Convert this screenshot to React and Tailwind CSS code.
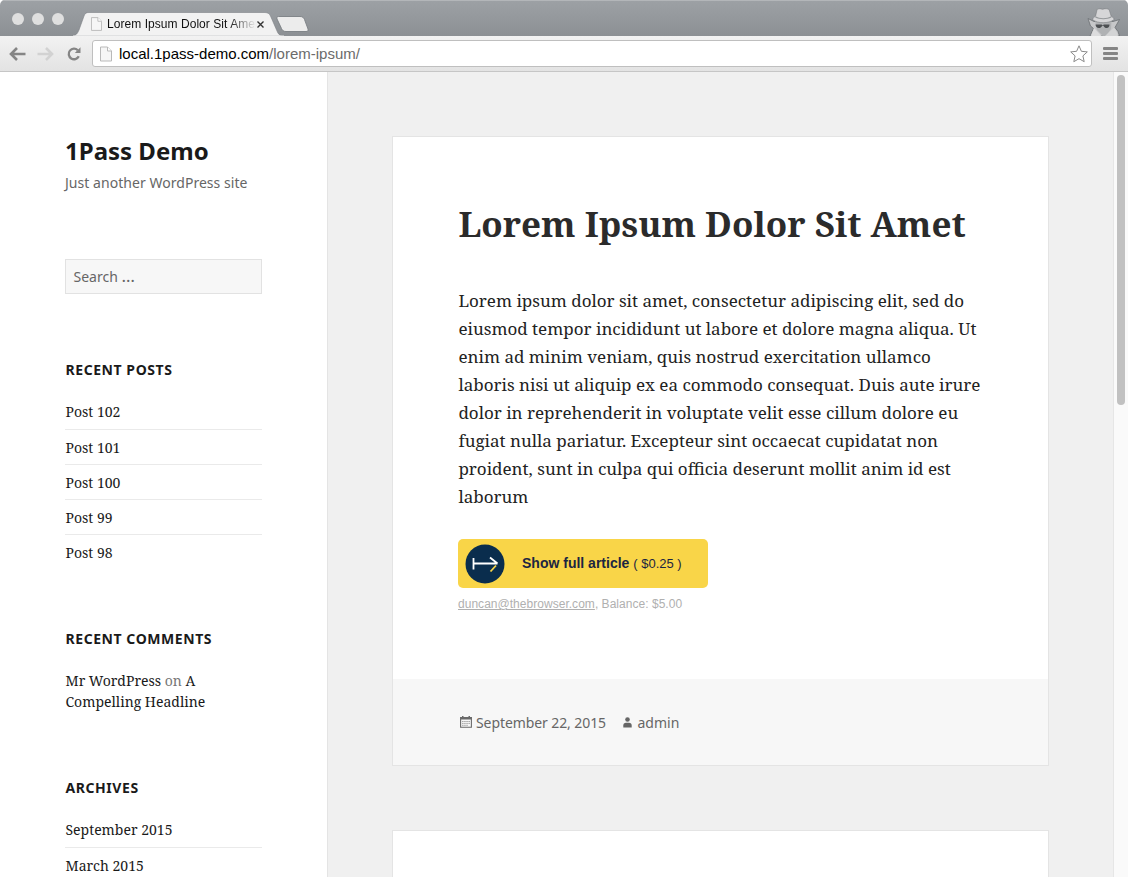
const posts = ['Post 102', 'Post 101', 'Post 100', 'Post 99', 'Post 98'];
const archives = ['September 2015', 'March 2015'];

function PageIcon({ className }) {
  return (
    <svg className={className} viewBox="0 0 12 15" fill="none">
      <path d="M.5.5h7l4 4v10H.5z" fill="#f6f6f6" stroke="#b9b9b9" />
      <path d="M7.5.5v4h4" fill="#fff" stroke="#b9b9b9" />
    </svg>
  );
}

function Incognito() {
  return (
    <svg className="h-[28px] w-[34px] shrink-0" viewBox="0 0 34 28">
      <path d="M1 10.500 7 13.500 26 13.500 32.500 11.500 28 19.500 31 23.500 32.500 28H3L5 23.500 6.500 20.500 3.500 18Z" fill="#c6c7c9" stroke="#6b6e72" strokeWidth=".8" />
      <path d="M8 13h16.500l-.5 8-5 7h-3l-6-6z" fill="#b0b2b4" />
      <path d="M7 20l7.500 8H4z" fill="#dcdcdd" />
      <path d="M27 19.500 18 28h13l-1-3.500z" fill="#d3d4d5" />
      <path d="M8.500 16.500h6l1.200.7 1.200-.7H22.500c0 2.300-1 3.500-2.700 3.500-1.500 0-2.700-.8-3.300-2.300h-1.300C14.500 19.200 13.300 20 11.800 20c-1.900 0-3.100-1.200-3.300-3.500z" fill="#4c4f52" />
      <path d="M5.500 11.500c.5-1.500 1.500-2.500 3-3.200L10 1.800C10.500.6 13 .3 15.500 1.300 18 .3 21.500.6 22.200 1.800l2 6.500c1.500.7 2.500 1.700 3 3.200-3 2.300-7 3.200-11 3.200s-8-.9-10.700-3.200z" fill="#d6d6d8" stroke="#7b7e82" strokeWidth=".6" />
      <path d="M8.500 8.300c4 2.500 11.500 2.500 15.700 0l.3 1.200c-4.500 2.300-12 2.300-16.300 0z" fill="#96999c" />
    </svg>
  );
}

function TabStrip() {
  return (
    <div className="flex h-[36px] items-end bg-linear-to-b from-[#9da1a5] to-[#8c9094] shadow-[inset_0_1px_0_#b3b6b9]">
      <div className="flex h-[36px] items-center gap-[8px] pt-[2px] pl-[12px]">
        <span className="size-[12px] rounded-full bg-[#dfdfdf]" />
        <span className="size-[12px] rounded-full bg-[#dfdfdf]" />
        <span className="size-[12px] rounded-full bg-[#dfdfdf]" />
      </div>
      <div className="relative ml-[9px] h-[24px] w-[213px]">
        <svg className="absolute inset-0 h-[24px] w-[213px]" viewBox="0 0 213 24">
          <path d="M0 24C4 23 5 20 6 18L11 4C12 1 13.500.5 16 .5H192C195 .5 196.500 2 197.500 4L204 19C205 22 207 24 211 24Z" fill="#f2f2f2" stroke="#7e8286" strokeWidth=".6" />
          <path d="M0 23.600H211V24H0z" fill="#f2f2f2" />
        </svg>
        <div className="relative flex h-[24px] items-center pl-[18px]">
          <PageIcon className="h-[14px] w-[11px] shrink-0" />
          <span className="ml-[5px] w-[149px] bg-linear-to-r from-[#111] from-82% to-transparent to-100% bg-clip-text text-[12px] leading-[16px] tracking-[0.05px] whitespace-nowrap text-transparent">
            Lorem Ipsum Dolor Sit Amet
          </span>
          <svg className="ml-[0.5px] size-[7px] shrink-0" viewBox="0 0 7 7">
            <path d="M.5.5l6 6M6.500.5l-6 6" stroke="#333" strokeWidth="1.400" />
          </svg>
        </div>
      </div>
      <svg className="mb-[3px] ml-[-11px] h-[18px] w-[34px]" viewBox="0 0 34 18">
        <path d="M3.500 1.500H25C27.500 1.500 28.500 2.500 29.500 4.500L33 14C33.500 15.700 32.800 16.500 31 16.500H11C8.500 16.500 7.500 15.500 6.500 13.500L2 4C1.500 2.500 2 1.500 3.500 1.500Z" fill="#ececec" stroke="#7b7f83" strokeWidth=".9" />
      </svg>
      <div className="ml-auto pr-[7px]">
        <Incognito />
      </div>
    </div>
  );
}

function Toolbar() {
  return (
    <div className="flex h-[36px] items-center border-b border-[#c6c6c6] bg-linear-to-b from-[#f2f2f2] to-[#e3e3e3] pl-[9px]">
      <svg className="h-[14px] w-[17px]" viewBox="0 0 17 14" fill="none" stroke="#858585" strokeWidth="2.600">
        <path d="M16.500 7H3M8 1 2 7l6 6" />
      </svg>
      <svg className="ml-[11px] h-[14px] w-[17px]" viewBox="0 0 17 14" fill="none" stroke="#d2d2d2" strokeWidth="2.600">
        <path d="M.5 7H14M9 1l6 6-6 6" />
      </svg>
      <svg className="ml-[13px] size-[14px]" viewBox="0 0 14 14" fill="none">
        <path d="M11.800 9.300A5.300 5.300 0 1 1 10.800 3.200" stroke="#858585" strokeWidth="2.300" />
        <path d="M13.500 .3V6H7.800z" fill="#858585" />
      </svg>
      <div className="ml-[11px] flex h-[27px] w-[1000px] items-center rounded-[3px] border border-[#bfbfbf] bg-white pr-[3px] pl-[7px]">
        <PageIcon className="h-[16px] w-[12px] shrink-0" />
        <span className="ml-[7px] text-[15px] leading-[20px] text-black">
          local.1pass-demo.com<span className="text-[#6b6b6b]">/lorem-ipsum/</span>
        </span>
        <svg className="ml-auto size-[18px]" viewBox="0 0 18 18" fill="none">
          <path d="M9 .8 11.400 6.300 17.300 6.900 12.900 10.900 14.200 16.700 9 13.700 3.800 16.700 5.100 10.900 .7 6.900 6.600 6.300z" stroke="#8a8a8a" strokeWidth="1" strokeLinejoin="round" />
        </svg>
      </div>
      <div className="ml-[11px] flex flex-col gap-[2px]">
        <span className="h-[3px] w-[15px] rounded-[1px] bg-[#858585]" />
        <span className="h-[3px] w-[15px] rounded-[1px] bg-[#858585]" />
        <span className="h-[3px] w-[15px] rounded-[1px] bg-[#858585]" />
      </div>
    </div>
  );
}

function Heading({ children }) {
  return <h2 className="pl-[0.5px] text-[14px] leading-[21px] font-bold tracking-[0.04em] text-[#1a1a1a]">{children}</h2>;
}

function LinkList({ items }) {
  return (
    <ul className="mt-[21px] font-['Noto_Serif',serif] text-[14px] leading-[21px] text-[#1a1a1a]">
      {items.map((item) => (
        <li key={item} className="h-[35px] border-t border-[#eaeaea] pt-[7px] pl-[0.5px] first:h-[28px] first:border-t-0 first:pt-0">
          {item}
        </li>
      ))}
    </ul>
  );
}

function Sidebar() {
  return (
    <aside className="w-[328px] shrink-0 overflow-hidden border-r border-[#e4e4e4] bg-white pr-[65px] pl-[65px] font-['Noto_Sans',sans-serif]">
      <h1 className="mt-[63px] text-[24px] leading-[32px] font-bold text-[#1a1a1a]">1Pass Demo</h1>
      <p className="mt-[5px] text-[14px] leading-[21px] tracking-[0.04px] text-[#666]">Just another WordPress site</p>
      <div className="mt-[66px] mb-[65px] flex h-[35px] w-[197px] items-center border border-[#e2e2e2] bg-[#f7f7f7] pl-[7.5px] text-[14px] text-[#666]">
        <span>
          Search <span className="text-[17px] leading-none">…</span>
        </span>
      </div>
      <Heading>RECENT POSTS</Heading>
      <LinkList items={posts} />
      <div className="mt-[59px]">
        <Heading>RECENT COMMENTS</Heading>
      </div>
      <p className="mt-[21px] mb-[65px] w-[170px] pl-[0.5px] font-['Noto_Serif',serif] text-[14px] leading-[21px] text-[#1a1a1a]">
        Mr WordPress <span className="text-[#777]">on</span> A Compelling Headline
      </p>
      <Heading>ARCHIVES</Heading>
      <LinkList items={archives} />
    </aside>
  );
}

function Article() {
  return (
    <article className="flex h-[630px] w-[657px] flex-col border border-[#e4e4e4] bg-white">
      <div className="h-[542px] pr-[60px] pl-[65px]">
        <h1 className="mt-[66px] pl-[0.4px] font-['Noto_Serif',serif] text-[35px] leading-[42px] font-bold whitespace-nowrap text-[#2b2b2b]">
          Lorem Ipsum Dolor Sit Amet
        </h1>
        <p className="mt-[42px] pl-[0.4px] font-['Noto_Serif',serif] text-[17px] leading-[28px] text-[#222]">
          Lorem ipsum dolor sit amet, consectetur adipiscing elit, sed do eiusmod tempor incididunt ut labore et dolore magna aliqua. Ut
          enim ad minim veniam, quis nostrud exercitation ullamco laboris nisi ut aliquip ex ea commodo consequat. Duis aute irure dolor
          in reprehenderit in voluptate velit esse cillum dolore eu fugiat nulla pariatur. Excepteur sint occaecat cupidatat non
          proident, sunt in culpa qui officia deserunt mollit anim id est laborum
        </p>
        <button className="mt-[28px] flex h-[49px] w-[250px] items-center rounded-[5px] bg-[#f9d548] pl-[7px] text-[#1c2541]">
          <svg className="size-[40px]" viewBox="0 0 40 40" fill="none">
            <circle cx="20" cy="20" r="19.500" fill="#0a2d4d" />
            <path d="M8.500 14v11.500M8.500 19.500h24M25 13.500l7.500 6" stroke="#fff" strokeWidth="1.800" />
            <path d="M31 21.500l-5.500 6" stroke="#f9d548" strokeWidth="1.800" />
          </svg>
          <span className="ml-[17px] text-[14px]">
            <b>Show full article</b> <span className="text-[13px]">( $0.25 )</span>
          </span>
        </button>
        <p className="mt-[8px] text-[12px] leading-[16px] tracking-[0.03px] text-[#b0b0b0]">
          <span className="underline">duncan@thebrowser.com</span>, Balance: $5.00
        </p>
      </div>
      <footer className="flex flex-1 items-center bg-[#f7f7f7] pl-[66.5px] font-['Noto_Sans',sans-serif] text-[14px] text-[#666]">
        <svg className="h-[12px] w-[12px]" viewBox="0 0 12 12" fill="none">
          <path d="M.6 1.500h10.800v9.800H.6z" stroke="#6a6a6a" strokeWidth="1.100" />
          <path d="M.5 1h11v2.500H.5zM2 0h1.500v2H2zM8.500 0H10v2H8.500z" fill="#6a6a6a" />
          <path d="M2.200 5.500h7.600M2.200 7.400h7.600M2.200 9.300h5.800" stroke="#8a8a8a" strokeWidth=".9" strokeDasharray="1.300 .8" />
        </svg>
        <span className="ml-[4.5px] tracking-[-0.09px]">September 22, 2015</span>
        <svg className="ml-[17px] h-[11px] w-[9px]" viewBox="0 0 9 11">
          <circle cx="4.500" cy="2.500" r="2.300" fill="#666" />
          <path d="M.3 10.500V8.500C.3 6.600 1.300 5.800 3 5.800h3c1.700 0 2.700.8 2.700 2.700v2z" fill="#666" />
        </svg>
        <span className="ml-[5.5px]">admin</span>
      </footer>
    </article>
  );
}

export default function App() {
  return (
    <div className="flex h-[877px] w-[1128px] flex-col overflow-hidden bg-white font-['Liberation_Sans',Arial,sans-serif]">
      <div className="shrink-0 overflow-hidden rounded-t-[5px]">
        <TabStrip />
        <Toolbar />
      </div>
      <div className="flex min-h-0 flex-1">
        <Sidebar />
        <main className="flex flex-1 flex-col gap-[64px] overflow-hidden bg-[#f0f0f0] pt-[64px] pl-[64px] *:shrink-0">
          <Article />
          <div className="h-[120px] w-[657px] border border-[#e4e4e4] bg-white" />
        </main>
        <div className="flex w-[15px] justify-center border-l border-[#e6e6e6] bg-[#fafafa] pt-[3px]">
          <div className="h-[330px] w-[8px] rounded-full bg-[#c1c1c1]" />
        </div>
      </div>
    </div>
  );
}
